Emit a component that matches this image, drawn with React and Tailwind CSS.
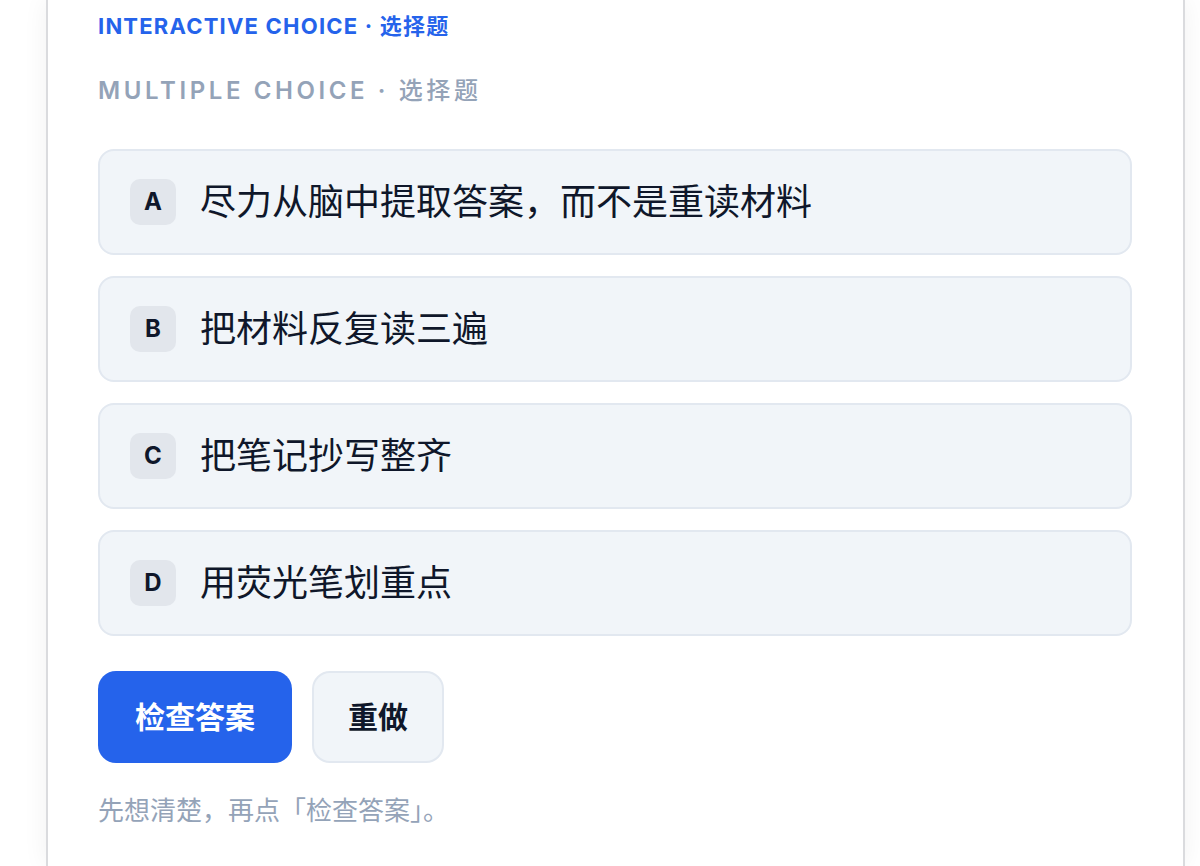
import { useState } from "react";

const options = [
  { key: "A", text: "尽力从脑中提取答案，而不是重读材料" },
  { key: "B", text: "把材料反复读三遍" },
  { key: "C", text: "把笔记抄写整齐" },
  { key: "D", text: "用荧光笔划重点" },
];

const font = { fontFamily: '"Inter", "Noto Sans CJK SC", sans-serif' };

export default function App() {
  const [picked, setPicked] = useState(null);

  return (
    <div className="min-h-screen bg-white" style={font}>
      <div className="ml-[46px] w-[1139px] min-h-[866px] bg-white border-x-2 border-[#dadbde] shadow-[0_0_24px_rgba(0,0,0,0.06)] pl-[50px] pr-[51px] pt-[10px]">
        <p className="text-[22px] leading-[33px] font-bold tracking-[0.055em] text-[#2563eb]">
          INTERACTIVE CHOICE · <span className="font-semibold">选择题</span>
        </p>

        <p className="mt-[30px] text-[24px] leading-[36px] font-semibold tracking-[0.15em] text-[#94a3b8]">
          MULTIPLE CHOICE · <span className="font-medium">选择题</span>
        </p>

        <div className="mt-[40px] flex flex-col gap-[21px]">
          {options.map((o) => (
            <button
              key={o.key}
              onClick={() => setPicked(o.key)}
              className={
                "h-[106px] w-full flex items-center gap-[24px] pl-[30px] rounded-[16px] border-2 text-left " +
                (picked === o.key
                  ? "bg-[#eff6ff] border-[#2563eb]"
                  : "bg-[#f1f5f9] border-[#e2e8f0]")
              }
            >
              <span className="w-[46px] h-[46px] flex items-center justify-center rounded-[10px] bg-[#e2e6ec] text-[24px] font-bold text-[#0f172a]">
                {o.key}
              </span>
              <span className="text-[36px] text-[#0f172a]">{o.text}</span>
            </button>
          ))}
        </div>

        <div className="mt-[35px] flex gap-[20px]">
          <button className="h-[92px] px-[37px] rounded-[18px] bg-[#2563eb] text-white text-[30px] font-bold">
            检查答案
          </button>
          <button
            onClick={() => setPicked(null)}
            className="h-[92px] px-[34px] rounded-[18px] bg-[#f1f5f9] border-2 border-[#e2e8f0] text-[#0f172a] text-[30px] font-bold"
          >
            重做
          </button>
        </div>

        <p className="mt-[28px] text-[26px] leading-[39px] text-[#94a3b8]">
          先想清楚，再点「检查答案」。
        </p>
      </div>
    </div>
  );
}
